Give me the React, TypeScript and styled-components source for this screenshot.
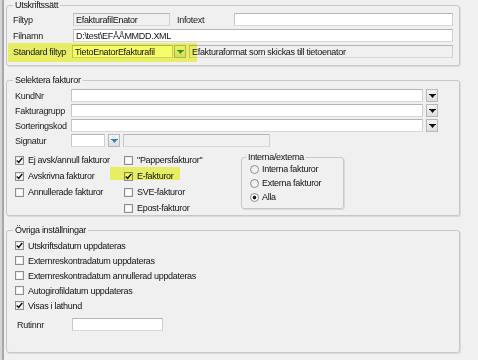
import { FC } from "react";
import styled, { createGlobalStyle } from "styled-components";

const GlobalStyle = createGlobalStyle`
  html, body {
    margin: 0;
    padding: 0;
    background: #f0f0f0;
  }
  body {
    font-family: "Liberation Sans", Arial, sans-serif;
    font-size: 9px;
    letter-spacing: -0.3px;
    color: #111;
  }
`;

type ArrowTone = "plain" | "green" | "teal";
const arrowColors: Record<ArrowTone, string> = {
  plain: "#111",
  green: "#2f9a2a",
  teal: "#2a86b4",
};

const DropArrow: FC<{ tone?: ArrowTone }> = ({ tone = "plain" }) => (
  <svg width="7" height="4" viewBox="0 0 7 4">
    <path d="M0 0h7v1H0z M1 1h5L3.5 4z" fill={arrowColors[tone]} />
  </svg>
);

const Tick: FC = () => (
  <svg width="7" height="7" viewBox="0 0 7 7">
    <path d="M0.8 3.4 L2.7 5.4 L6.2 1" stroke="#111" strokeWidth="1.5" fill="none" />
  </svg>
);

const Page = styled.div`
  border-left: 2px solid #d6d6d6;
  height: 360px;
  box-sizing: border-box;
`;

const Window = styled.div`
  border-left: 2px solid #a8a8a8;
  height: 100%;
  padding-left: 2px;
  display: flex;
  flex-direction: column;
  gap: 9px;
`;

const Group = styled.fieldset<{ $h: number; $pl: number; $pr: number }>`
  position: relative;
  margin: 0;
  width: 454px;
  height: ${(p) => p.$h}px;
  box-sizing: border-box;
  min-width: 0;
  padding: 0 ${(p) => p.$pr}px 0 ${(p) => p.$pl}px;
  border: 1px solid #c8c8c8;
  border-radius: 3px;
  box-shadow: 1px 1px 0 #dadada;
`;

const Legend = styled.legend<{ $ml: number }>`
  margin-left: ${(p) => p.$ml}px;
  padding: 0 2px;
  line-height: 10px;
  height: 10px;
  font-size: 9px;
  color: #111;
`;

const Rows = styled.div<{ $pt: number; $gap: number }>`
  display: flex;
  flex-direction: column;
  padding-top: ${(p) => p.$pt}px;
  gap: ${(p) => p.$gap}px;
`;

const FieldRow = styled.div`
  display: flex;
  align-items: center;
  height: 13px;
`;

const Label = styled.span<{ $w: number; $ml?: number }>`
  width: ${(p) => p.$w}px;
  margin-left: ${(p) => p.$ml ?? 0}px;
  flex: none;
  white-space: nowrap;
  color: #1a1a1a;
`;

const TextBox = styled.input<{ $w?: number; $gray?: boolean; $ml?: number }>`
  box-sizing: border-box;
  height: 13px;
  ${(p) => (p.$w ? `width: ${p.$w}px; flex: none;` : "flex: 1; min-width: 0;")}
  margin: 0 0 0 ${(p) => p.$ml ?? 0}px;
  padding: 0 0 0 2px;
  border: 1px solid;
  border-color: #b4b4b4 #cfcfcf #d8d8d8 #c6c6c6;
  background: ${(p) => (p.$gray ? "#f0f0f0" : "#fff")};
  font: inherit;
  font-size: 9px;
  letter-spacing: -0.3px;
  line-height: 11px;
  color: #111;
  outline: none;
`;

const DropButton = styled.span<{ $ml?: number }>`
  box-sizing: border-box;
  flex: none;
  width: 12px;
  height: 13px;
  margin-left: ${(p) => p.$ml ?? 3}px;
  display: flex;
  align-items: center;
  justify-content: center;
  border: 1px solid #b8b8b8;
  background: linear-gradient(#f6f6f6, #dedede);
`;

/* highlighter marks painted over the form */
const Highlight = styled.div<{ $x: number; $y: number; $w: number; $h: number }>`
  position: absolute;
  left: ${(p) => p.$x}px;
  top: ${(p) => p.$y}px;
  width: ${(p) => p.$w}px;
  height: ${(p) => p.$h}px;
  background: #f6fc6a;
  mix-blend-mode: multiply;
  pointer-events: none;
`;

const Options = styled.div`
  display: flex;
  margin-top: 5px;
`;

const CheckColumn = styled.div<{ $w: number }>`
  width: ${(p) => p.$w}px;
  flex: none;
  display: flex;
  flex-direction: column;
`;

const CheckRow = styled.label<{ $h?: number }>`
  display: flex;
  align-items: center;
  height: ${(p) => p.$h ?? 16}px;
  gap: 4px;
  white-space: nowrap;
  color: #111;
`;

const Box = styled.span`
  box-sizing: border-box;
  width: 9px;
  height: 9px;
  flex: none;
  display: flex;
  align-items: center;
  justify-content: center;
  border: 1px solid #8d8d8d;
  background: #fff;
  box-shadow: inset 0 0 0 1px #ececec;
`;

const CheckBox: FC<{ label: string; checked?: boolean; h?: number }> = ({
  label,
  checked,
  h,
}) => (
  <CheckRow $h={h}>
    <Box>{checked && <Tick />}</Box>
    <span>{label}</span>
  </CheckRow>
);

const RadioGroup = styled.fieldset`
  margin: 0;
  width: 103px;
  height: 57px;
  box-sizing: border-box;
  min-width: 0;
  padding: 0 0 0 8px;
  border: 1px solid #c8c8c8;
  border-radius: 3px;
  box-shadow: 1px 1px 0 #dadada;
`;

const RadioRow = styled.label`
  display: flex;
  align-items: center;
  height: 14px;
  gap: 3px;
  white-space: nowrap;
`;

const Dot = styled.span<{ $on?: boolean }>`
  box-sizing: border-box;
  width: 9px;
  height: 9px;
  border-radius: 50%;
  border: 1px solid #8d8d8d;
  background: ${(p) =>
    p.$on
      ? "radial-gradient(circle, #222 0 1.6px, #fff 2.2px)"
      : "linear-gradient(135deg, #e4e4e4, #fff)"};
`;

const Radio: FC<{ label: string; on?: boolean }> = ({ label, on }) => (
  <RadioRow>
    <Dot $on={on} />
    <span>{label}</span>
  </RadioRow>
);

const BottomRow = styled.div`
  display: flex;
  align-items: center;
  height: 13px;
  margin-top: 5px;
  padding-left: 2px;
`;

const App: FC = () => {
  return (
    <>
      <GlobalStyle />
      <Page>
        <Window>
          <Group $h={66} $pl={6} $pr={6}>
            <Legend $ml={0}>Utskriftssätt</Legend>
            <Rows $pt={3} $gap={3}>
              <FieldRow>
                <Label $w={60}>Filtyp</Label>
                <TextBox $w={97} $gray readOnly value="EfakturafilEnator" />
                <Label $w={57} $ml={7}>
                  Infotext
                </Label>
                <TextBox readOnly value="" />
              </FieldRow>
              <FieldRow>
                <Label $w={60}>Filnamn</Label>
                <TextBox readOnly value="D:\test\EFÅÅMMDD.XML" />
              </FieldRow>
              <FieldRow>
                <Label $w={59}>Standard filtyp</Label>
                <TextBox $w={101} readOnly value="TietoEnatorEfakturafil" />
                <DropButton $ml={1}>
                  <DropArrow tone="green" />
                </DropButton>
                <TextBox
                  $gray
                  $ml={3}
                  readOnly
                  value="Efakturaformat som skickas till tietoenator"
                />
              </FieldRow>
            </Rows>
            <Highlight $x={1} $y={33} $w={189} $h={19} />
          </Group>

          <Group $h={141} $pl={8} $pr={21}>
            <Legend $ml={-2}>Selektera fakturor</Legend>
            <Rows $pt={4} $gap={2}>
              <FieldRow>
                <Label $w={56}>KundNr</Label>
                <TextBox readOnly value="" />
                <DropButton>
                  <DropArrow />
                </DropButton>
              </FieldRow>
              <FieldRow>
                <Label $w={56}>Fakturagrupp</Label>
                <TextBox readOnly value="" />
                <DropButton>
                  <DropArrow />
                </DropButton>
              </FieldRow>
              <FieldRow>
                <Label $w={56}>Sorteringskod</Label>
                <TextBox readOnly value="" />
                <DropButton>
                  <DropArrow />
                </DropButton>
              </FieldRow>
              <FieldRow>
                <Label $w={56}>Signatur</Label>
                <TextBox $w={34} readOnly value="" />
                <DropButton>
                  <DropArrow tone="teal" />
                </DropButton>
                <TextBox $w={147} $ml={3} $gray readOnly value="" />
              </FieldRow>
            </Rows>
            <Options>
              <CheckColumn $w={109}>
                <CheckBox label="Ej avsk/annull fakturor" checked />
                <CheckBox label="Avskrivna fakturor" checked />
                <CheckBox label="Annullerade fakturor" />
              </CheckColumn>
              <CheckColumn $w={117}>
                <CheckBox label={"\"Pappersfakturor\""} />
                <CheckBox label="E-fakturor" checked />
                <CheckBox label="SVE-fakturor" />
                <CheckBox label="Epost-fakturor" />
              </CheckColumn>
              <RadioGroup>
                <Legend $ml={-4}>Interna/externa</Legend>
                <Radio label="Interna fakturor" />
                <Radio label="Externa fakturor" />
                <Radio label="Alla" on />
              </RadioGroup>
            </Options>
            <Highlight $x={103} $y={82} $w={70} $h={13} />
          </Group>

          <Group $h={128} $pl={8} $pr={8}>
            <Legend $ml={-2}>Övriga inställningar</Legend>
            <Rows $pt={3} $gap={0}>
              <CheckBox label="Utskriftsdatum uppdateras" checked h={15} />
              <CheckBox label="Externreskontradatum uppdateras" h={15} />
              <CheckBox label="Externreskontradatum annullerad uppdateras" h={15} />
              <CheckBox label="Autogirofildatum uppdateras" h={15} />
              <CheckBox label="Visas i lathund" checked h={15} />
            </Rows>
            <BottomRow>
              <Label $w={55}>Rutinnr</Label>
              <TextBox $w={91} readOnly value="" />
            </BottomRow>
          </Group>
        </Window>
      </Page>
    </>
  );
};

export default App;
